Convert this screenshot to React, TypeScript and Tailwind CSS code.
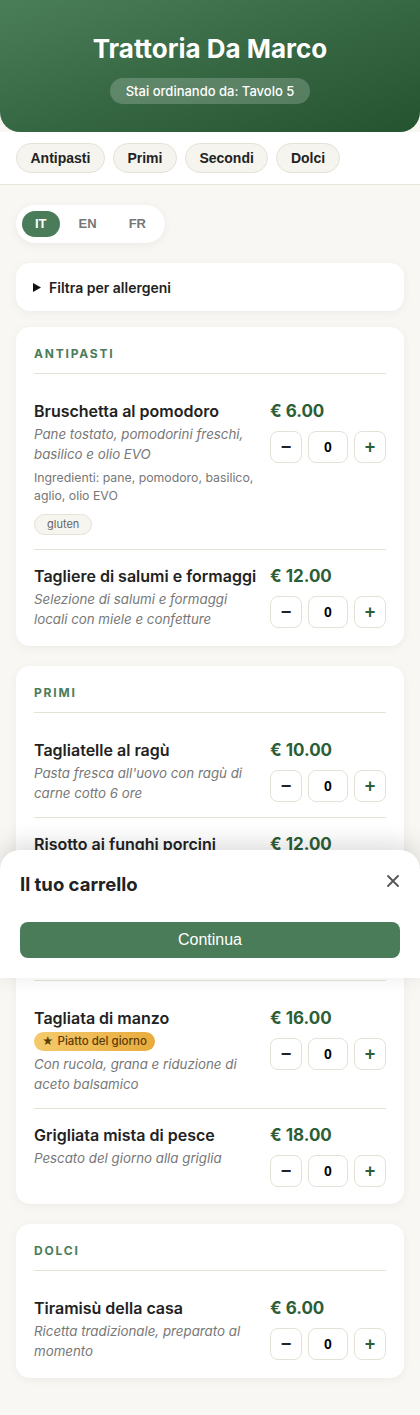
import React from "react";

type Dish = {
  name: string;
  price: string;
  desc: string;
  ingredients?: string;
  tags?: string[];
  special?: boolean;
};

type Section = { title: string; dishes: Dish[] };

const sections: Section[] = [
  {
    title: "Antipasti",
    dishes: [
      {
        name: "Bruschetta al pomodoro",
        price: "€ 6.00",
        desc: "Pane tostato, pomodorini freschi, basilico e olio EVO",
        ingredients: "Ingredienti: pane, pomodoro, basilico, aglio, olio EVO",
        tags: ["gluten"],
      },
      {
        name: "Tagliere di salumi e formaggi",
        price: "€ 12.00",
        desc: "Selezione di salumi e formaggi locali con miele e confetture",
      },
    ],
  },
  {
    title: "Primi",
    dishes: [
      {
        name: "Tagliatelle al ragù",
        price: "€ 10.00",
        desc: "Pasta fresca all'uovo con ragù di carne cotto 6 ore",
      },
      {
        name: "Risotto ai funghi porcini",
        price: "€ 12.00",
        desc: "Riso Carnaroli mantecato con porcini freschi",
      },
    ],
  },
  {
    title: "Secondi",
    dishes: [
      {
        name: "Tagliata di manzo",
        price: "€ 16.00",
        desc: "Con rucola, grana e riduzione di aceto balsamico",
        special: true,
      },
      {
        name: "Grigliata mista di pesce",
        price: "€ 18.00",
        desc: "Pescato del giorno alla griglia",
      },
    ],
  },
  {
    title: "Dolci",
    dishes: [
      {
        name: "Tiramisù della casa",
        price: "€ 6.00",
        desc: "Ricetta tradizionale, preparato al momento",
      },
    ],
  },
];

const arial = "font-['Liberation_Sans',Arial,sans-serif]";

const DishRow = ({ dish, last }: { dish: Dish; last: boolean }) => (
  <div
    className={`flex justify-between gap-3 py-[14px] ${
      last ? "" : "border-b border-[#e6e1d6]"
    }`}
  >
    <div className="flex-1 min-w-0">
      <p className="text-[16px] leading-[24px] font-semibold text-[#222]">
        {dish.name}
      </p>
      {dish.special && (
        <div className="flex w-fit items-center gap-1 mt-[2px] h-[19px] px-2 rounded-full bg-gradient-to-r from-[#f4ca6c] to-[#e8ab3c] text-[11.5px] font-medium text-[#5b3b05]">
          <span className="text-[11px]">★</span> Piatto del giorno
        </div>
      )}
      <p
        className={`${
          dish.special ? "mt-[3px]" : "mt-px"
        } text-[13.3px] leading-[20px] italic text-[#777]`}
      >
        {dish.desc}
      </p>
      {dish.ingredients && (
        <p className="mt-[5px] text-[12.3px] leading-[18px] text-[#777]">
          {dish.ingredients}
        </p>
      )}
      {dish.tags && (
        <div className="mt-[9px] flex gap-1.5">
          {dish.tags.map((t) => (
            <span
              key={t}
              className="h-[21px] px-3 rounded-full border border-[#e6e1d6] bg-[#f7f5f0] text-[11px] leading-[19px] text-[#666]"
            >
              {t}
            </span>
          ))}
        </div>
      )}
    </div>
    <div className="w-[116px] shrink-0">
      <p className="text-[17px] leading-[24px] font-bold text-[#2c5e37]">
        {dish.price}
      </p>
      <div className="mt-2 flex gap-1.5">
        <button
          className={`${arial} w-8 h-8 rounded-lg border border-[#e6e1d6] bg-white text-[18px] font-bold text-[#222] leading-none`}
        >
          −
        </button>
        <div
          className={`${arial} w-10 h-8 rounded-lg border border-[#e6e1d6] bg-white flex items-center justify-center text-[14px] font-bold text-black`}
        >
          0
        </div>
        <button
          className={`${arial} w-8 h-8 rounded-lg border border-[#e6e1d6] bg-white text-[18px] font-bold text-[#2c5e37] leading-none`}
        >
          +
        </button>
      </div>
    </div>
  </div>
);

export default function App() {
  return (
    <div className="relative min-h-[1415px] bg-[#f8f7f3] font-['Inter',sans-serif] text-[#222]">
      <header className="h-[132px] rounded-b-[20px] bg-gradient-to-br from-[#4a7e59] to-[#24532f] flex flex-col items-center pt-[33px]">
        <h1 className="text-[26px] leading-[32px] font-bold text-white">
          Trattoria Da Marco
        </h1>
        <span className="mt-[13px] h-[26px] px-4 rounded-full bg-white/20 text-[13px] leading-[26px] font-medium text-white">
          Stai ordinando da: Tavolo 5
        </span>
      </header>

      <nav className="bg-white border-b border-[#e8e4da] px-4 py-[11px] flex gap-2">
        {["Antipasti", "Primi", "Secondi", "Dolci"].map((t) => (
          <button
            key={t}
            className={`${arial} h-[30px] px-[13.5px] rounded-full border border-[#e6e1d6] bg-[#f6f4ef] text-[14px] font-bold text-[#222]`}
          >
            {t}
          </button>
        ))}
      </nav>

      <main className="px-4 pt-5 pb-9">
        <div className="inline-flex gap-1.5 p-1.5 rounded-full bg-white shadow-[0_2px_10px_rgba(0,0,0,0.06)]">
          {["IT", "EN", "FR"].map((l, i) => (
            <button
              key={l}
              className={`${arial} h-[26px] px-[13px] rounded-full text-[13px] font-bold ${
                i === 0 ? "bg-[#4a7c59] text-white" : "text-[#777]"
              }`}
            >
              {l}
            </button>
          ))}
        </div>

        <div className="mt-5 h-12 rounded-[14px] bg-white shadow-[0_2px_10px_rgba(0,0,0,0.05)] flex items-center px-[17px] gap-2">
          <svg width="8" height="9" viewBox="0 0 8 9">
            <path d="M0 0 L8 4.5 L0 9 Z" fill="#111" />
          </svg>
          <span className="text-[14px] font-semibold text-[#222]">
            Filtra per allergeni
          </span>
        </div>

        <div className="mt-4 flex flex-col gap-5">
          {sections.map((s) => (
            <section
              key={s.title}
              className="rounded-[14px] bg-white px-[18px] pt-[18px] pb-[3px] shadow-[0_2px_10px_rgba(0,0,0,0.05)]"
            >
              <h2 className="pb-2.5 mb-[11px] border-b border-[#e6e1d6] text-[12px] leading-[18px] font-bold uppercase tracking-[0.15em] text-[#4a7c59]">
                {s.title}
              </h2>
              {s.dishes.map((d, i) => (
                <DishRow key={d.name} dish={d} last={i === s.dishes.length - 1} />
              ))}
            </section>
          ))}
        </div>
      </main>

      <div className="absolute left-0 right-0 top-[850px] h-[128px] rounded-t-[20px] bg-white px-5 pt-[22px] shadow-[0_-6px_24px_rgba(0,0,0,0.14)]">
        <div className="flex items-start justify-between">
          <h3 className="text-[18.5px] leading-[24px] font-bold text-[#222]">
            Il tuo carrello
          </h3>
          <svg
            width="12"
            height="12"
            viewBox="0 0 12 12"
            className="mt-[3px] mr-[1px]"
          >
            <path
              d="M1 1 L11 11 M11 1 L1 11"
              stroke="#555"
              strokeWidth="1.8"
              strokeLinecap="round"
            />
          </svg>
        </div>
        <button
          className={`${arial} mt-[26px] w-full h-9 rounded-lg bg-[#4a7c59] text-[16px] text-white`}
        >
          Continua
        </button>
      </div>
    </div>
  );
}
